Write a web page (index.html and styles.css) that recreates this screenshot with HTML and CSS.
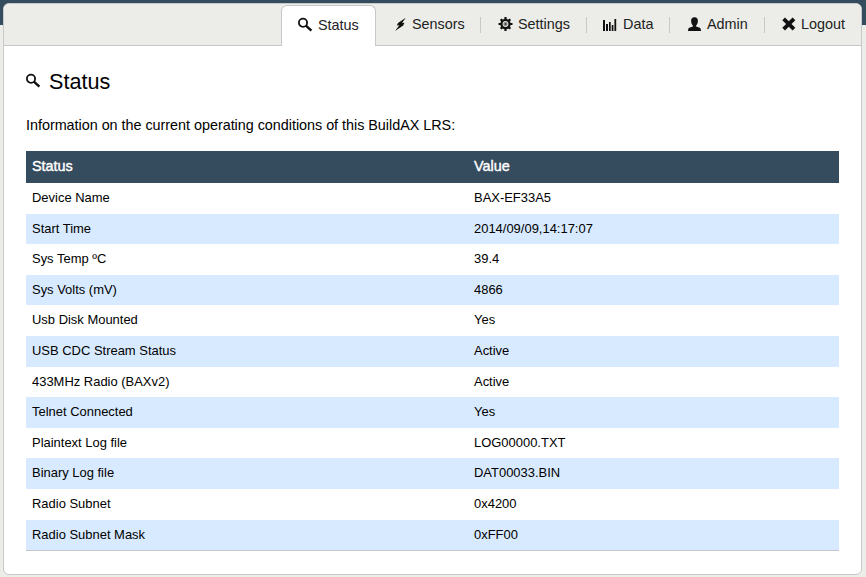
FILE: index.html
```html
<!DOCTYPE html>
<html lang="en">
<head>
<meta charset="utf-8">
<title>Status</title>
<link rel="stylesheet" href="styles.css">
</head>
<body>
<svg width="0" height="0" class="defs">
  <symbol id="search" viewBox="0 0 16 16"><circle cx="5" cy="5.7" r="4.1" fill="none" stroke="currentColor" stroke-width="1.8"/><path d="M7.900 8.600l5.500 5" stroke="currentColor" stroke-width="2.500" fill="none"/></symbol>
</svg>
<main class="card">
  <nav class="tabs">
    <a class="tab active"><svg class="icon"><use href="#search"/></svg>Status</a>
    <a class="tab sensors"><svg class="icon" viewBox="0 0 16 16"><path d="M13.800 1.800L6 7 4.800 9.400l2.600-.1L3 15l8.200-5.600 1.200-2.700-2.400.2z"/></svg>Sensors</a>
    <a class="tab settings"><svg class="icon" viewBox="0 0 16 16"><circle cx="7.500" cy="8" r="4.100" fill="none" stroke="currentColor" stroke-width="2.300"/><circle cx="7.500" cy="8" r="2.300" fill="#999"/><circle cx="7.500" cy="8" r="1" fill="#444"/><path d="M7.500 1v2.500M7.500 12.500v2.500M.5 8H3M12 8h2.500M2.700 3.200l1.700 1.700M10.600 11.100l1.700 1.700M12.300 3.200l-1.700 1.700M4.400 11.100l-1.700 1.700" fill="none" stroke="currentColor" stroke-width="2.200"/></svg>Settings</a>
    <a class="tab data"><svg class="icon" viewBox="0 0 16 16"><path d="M0 4h2v11H0zM3 8h2v7H3zM6 6h1.700v9H6zM8.700 9h1.700v6H8.700zM11.400 3h1.800v12h-1.800z"/></svg>Data</a>
    <a class="tab admin"><svg class="icon" viewBox="0 0 16 16"><path d="M7.500 1.300C5 1.300 3.900 3 4.100 5.200c.1 1.900.8 3.300 1.800 4.200v1.200L2.200 11.800Q1 12.300 1 14.900h13q0-2.600-1.200-3.100L9.100 10.600V9.400c1-.9 1.700-2.300 1.800-4.200.2-2.200-.9-3.900-3.400-3.900z"/></svg>Admin</a>
    <a class="tab logout"><svg class="icon" viewBox="0 0 16 16"><path d="M4 1.500l3.800 3.800 3.800-3.800 2.700 2.700L10.500 8l3.800 3.800-2.700 2.700L7.800 10.700 4 14.500l-2.700-2.700L5.100 8 1.300 4.200z"/></svg>Logout</a>
  </nav>
  <section class="content">
    <h1><svg class="icon"><use href="#search"/></svg>Status</h1>
    <p>Information on the current operating conditions of this BuildAX LRS:</p>
    <div class="table">
      <div class="row head"><span>Status</span><span>Value</span></div>
      <div class="row"><span>Device Name</span><span>BAX-EF33A5</span></div>
      <div class="row"><span>Start Time</span><span>2014/09/09,14:17:07</span></div>
      <div class="row"><span>Sys Temp ºC</span><span>39.4</span></div>
      <div class="row"><span>Sys Volts (mV)</span><span>4866</span></div>
      <div class="row"><span>Usb Disk Mounted</span><span>Yes</span></div>
      <div class="row"><span>USB CDC Stream Status</span><span>Active</span></div>
      <div class="row"><span>433MHz Radio (BAXv2)</span><span>Active</span></div>
      <div class="row"><span>Telnet Connected</span><span>Yes</span></div>
      <div class="row"><span>Plaintext Log file</span><span>LOG00000.TXT</span></div>
      <div class="row"><span>Binary Log file</span><span>DAT00033.BIN</span></div>
      <div class="row"><span>Radio Subnet</span><span>0x4200</span></div>
      <div class="row"><span>Radio Subnet Mask</span><span>0xFF00</span></div>
    </div>
  </section>
</main>
</body>
</html>
```
FILE: styles.css
```css
* { box-sizing: border-box; }
body {
  margin: 0;
  height: 577px;
  padding: 3px 4px 2px 3px;
  overflow: hidden;
  background: linear-gradient(#354b5e 0 25px, #ecede8 25px);
  font: 14.4px "Liberation Sans", Arial, sans-serif;
  color: #000;
}
.defs { display: block; height: 0; }
.card {
  height: 572px;
  background: #fff;
  border: 1px solid #c8c9ca;
  border-radius: 6px;
  overflow: hidden;
}
.tabs {
  display: flex;
  justify-content: flex-end;
  height: 42px;
  background: #ecede8;
  border-bottom: 1px solid #c8c8c8;
}
.tab {
  display: flex;
  align-items: center;
  gap: 4px;
  height: 41px;
  padding: 0 0 2px 16px;
  color: #222;
}
.icon { width: 16px; height: 16px; flex: none; fill: currentColor; color: #111; }
.active {
  margin-top: 1px;
  width: 95px;
  background: #fff;
  border: 1px solid #c8c8c8;
  border-bottom: 0;
  border-radius: 6px 6px 0 0;
}
.sensors { width: 105px; }
.settings { width: 106px; padding-left: 17px; }
.data { width: 83px; }
.admin { width: 95px; padding-left: 17px; }
.logout { width: 96px; }
.sensors, .settings, .data, .admin {
  background: linear-gradient(#c8c8c8, #c8c8c8) right 13px / 1px 16px no-repeat;
}
.content { padding: 22px 22px 0; }
h1 {
  display: flex;
  align-items: center;
  gap: 7px;
  height: 28px;
  margin: 0 0 20px;
  font-size: 21.6px;
  font-weight: 400;
}
h1 .icon { margin-top: -2px; }
p { margin: 0; height: 35px; line-height: 19px; letter-spacing: -0.03px; }
.row {
  display: grid;
  grid-template-columns: 442px 1fr;
  height: 30.62px;
  padding-left: 6px;
  line-height: 29px;
  font-size: 12.96px;
}
.row:nth-child(odd) { background: #d8eaff; }
.table .head {
  height: 32px;
  background: #354b5e;
  color: #fff;
  font-size: 14.4px;
  line-height: 31px;
  -webkit-text-stroke: 0.4px #fff;
}
.table { border-bottom: 1px solid #c4c8cc; width: 813px; }
```
